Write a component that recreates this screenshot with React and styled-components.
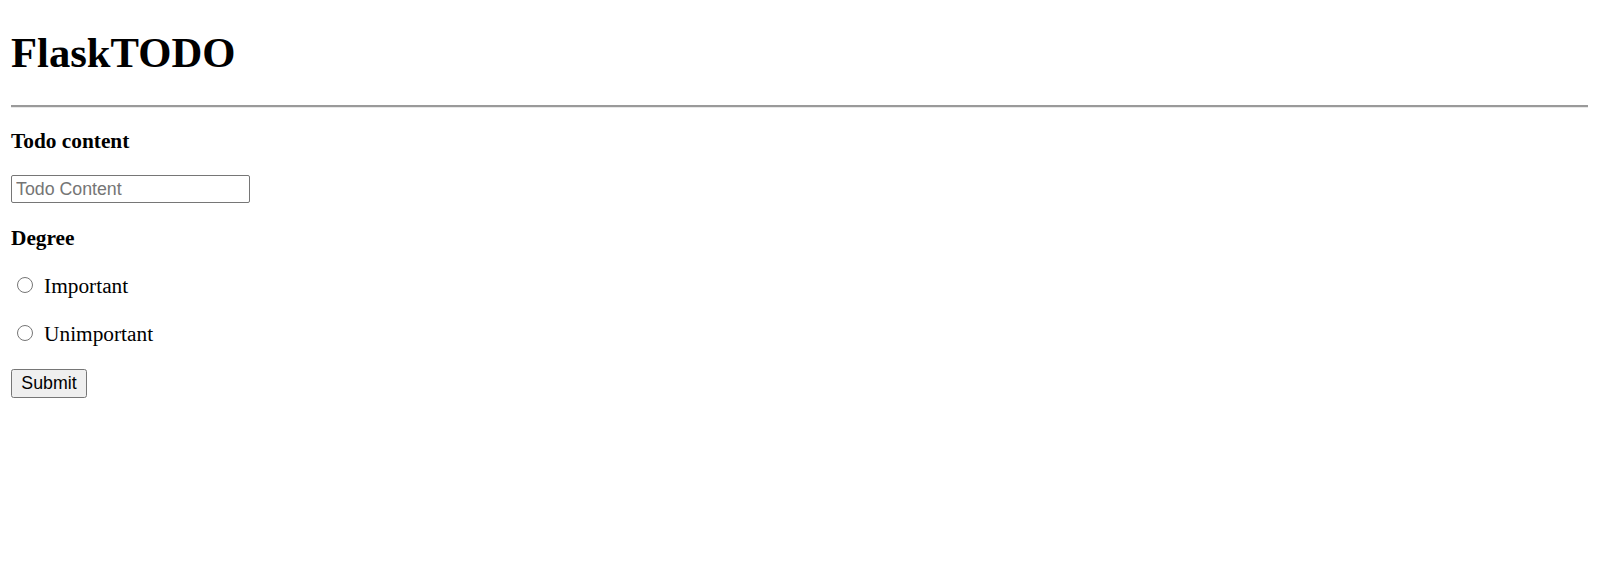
import styled, { createGlobalStyle } from 'styled-components'
import { useState } from 'react'

const GlobalStyle = createGlobalStyle`
html, body {
    margin: 0;
    padding: 0;
    background: #ffffff;
}
body {
    font-family: "Liberation Serif", "Times New Roman", serif;
    color: #000000;
}
`

const Page = styled.form`
display: flex;
flex-direction: column;
align-items: flex-start;
padding: 0 11px 40px 11px;
`

const Title = styled.h1`
margin: 29.1px 0 0 0;
font-size: 42.67px;
line-height: 48px;
font-weight: 700;
`

const Rule = styled.hr`
align-self: stretch;
margin: 27.7px 0 0 0;
height: 0;
border: none;
border-top: 2px solid #9a9a9a;
border-bottom: 1px solid #e8e8e8;
`

const FieldLabel = styled.label`
margin-top: ${(props) => props.$gap}px;
font-size: 21.33px;
line-height: 24px;
font-weight: 700;
`

const TextInput = styled.input`
margin-top: 21.9px;
box-sizing: border-box;
width: 239px;
height: 28px;
padding: 2px 4px 0 4px;
border: 1px solid #767676;
border-radius: 2px;
font-family: "Liberation Sans", Arial, sans-serif;
font-size: 17.78px;
color: #000;
outline: none;
&::placeholder{
    color: #757575;
}
`

const RadioRow = styled.label`
margin-top: ${(props) => props.$gap}px;
display: flex;
align-items: flex-start;
font-size: 21.33px;
line-height: 24px;
`

const Radio = styled.input`
appearance: none;
margin: 2.8px 11.5px 0 5.6px;
width: 16px;
height: 16px;
box-sizing: border-box;
border: 1px solid #767676;
border-radius: 50%;
background: #ffffff;
&:checked{
    border: 5px solid #0075ff;
}
`

const SubmitButton = styled.button`
margin-top: 22.9px;
box-sizing: border-box;
width: 76px;
height: 29px;
padding: 0;
border: 1px solid #767676;
border-radius: 2.6px;
background: #efefef;
font-family: "Liberation Sans", Arial, sans-serif;
font-size: 17.78px;
color: #000;
`

const App = () => {
    const [content, setContent] = useState('')
    const [degree, setDegree] = useState('')

    return (
        <>
            <GlobalStyle />
            <Page onSubmit={(e) => e.preventDefault()}>
                <Title>FlaskTODO</Title>
                <Rule />
                <FieldLabel $gap={21} htmlFor='content'>Todo content</FieldLabel>
                <TextInput
                    id='content'
                    type='text'
                    placeholder='Todo Content'
                    value={content}
                    onChange={(e) => setContent(e.target.value)}
                />
                <FieldLabel $gap={23}>Degree</FieldLabel>
                <RadioRow $gap={24.1}>
                    <Radio type='radio' name='degree' checked={degree === 'important'} onChange={() => setDegree('important')} />
                    Important
                </RadioRow>
                <RadioRow $gap={24.3}>
                    <Radio type='radio' name='degree' checked={degree === 'unimportant'} onChange={() => setDegree('unimportant')} />
                    Unimportant
                </RadioRow>
                <SubmitButton type='submit'>Submit</SubmitButton>
            </Page>
        </>
    )
}

export default App
